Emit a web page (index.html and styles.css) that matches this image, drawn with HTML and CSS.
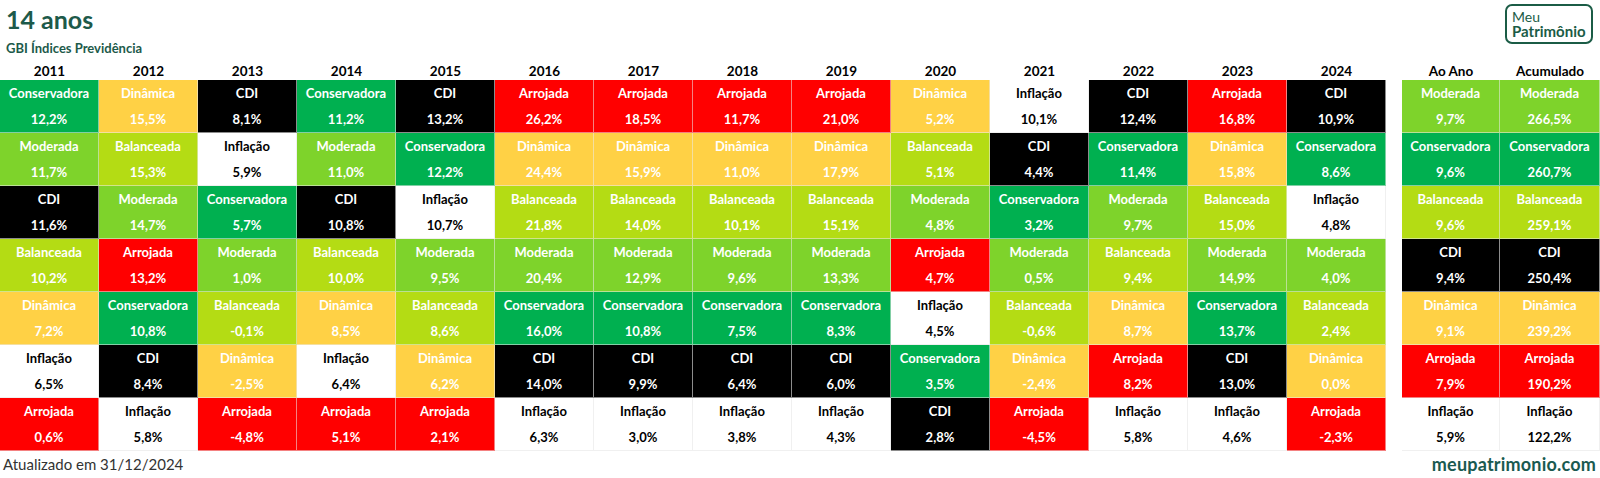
FILE: index.html
```html
<!DOCTYPE html>
<html lang="pt-BR">
<head>
<meta charset="utf-8">
<title>14 anos - GBI Índices Previdência</title>
<link rel="stylesheet" href="styles.css">
</head>
<body>
<div class="page">
  <header class="top">
    <div class="titles">
      <h1 class="title">14 anos</h1>
      <div class="subtitle">GBI Índices Previdência</div>
    </div>
    <div class="logo"><span class="logo-meu">Meu</span><span class="logo-pat">Patrimônio</span></div>
  </header>

  <main class="tables">
    <section class="grid years">
      <div class="hd">2011</div>
      <div class="cell c"><span>Conservadora</span><span>12,2%</span></div>
      <div class="cell m"><span>Moderada</span><span>11,7%</span></div>
      <div class="cell k"><span>CDI</span><span>11,6%</span></div>
      <div class="cell b"><span>Balanceada</span><span>10,2%</span></div>
      <div class="cell d"><span>Dinâmica</span><span>7,2%</span></div>
      <div class="cell i"><span>Inflação</span><span>6,5%</span></div>
      <div class="cell a"><span>Arrojada</span><span>0,6%</span></div>

      <div class="hd">2012</div>
      <div class="cell d"><span>Dinâmica</span><span>15,5%</span></div>
      <div class="cell b"><span>Balanceada</span><span>15,3%</span></div>
      <div class="cell m"><span>Moderada</span><span>14,7%</span></div>
      <div class="cell a"><span>Arrojada</span><span>13,2%</span></div>
      <div class="cell c"><span>Conservadora</span><span>10,8%</span></div>
      <div class="cell k"><span>CDI</span><span>8,4%</span></div>
      <div class="cell i"><span>Inflação</span><span>5,8%</span></div>

      <div class="hd">2013</div>
      <div class="cell k"><span>CDI</span><span>8,1%</span></div>
      <div class="cell i"><span>Inflação</span><span>5,9%</span></div>
      <div class="cell c"><span>Conservadora</span><span>5,7%</span></div>
      <div class="cell m"><span>Moderada</span><span>1,0%</span></div>
      <div class="cell b"><span>Balanceada</span><span>-0,1%</span></div>
      <div class="cell d"><span>Dinâmica</span><span>-2,5%</span></div>
      <div class="cell a"><span>Arrojada</span><span>-4,8%</span></div>

      <div class="hd">2014</div>
      <div class="cell c"><span>Conservadora</span><span>11,2%</span></div>
      <div class="cell m"><span>Moderada</span><span>11,0%</span></div>
      <div class="cell k"><span>CDI</span><span>10,8%</span></div>
      <div class="cell b"><span>Balanceada</span><span>10,0%</span></div>
      <div class="cell d"><span>Dinâmica</span><span>8,5%</span></div>
      <div class="cell i"><span>Inflação</span><span>6,4%</span></div>
      <div class="cell a"><span>Arrojada</span><span>5,1%</span></div>

      <div class="hd">2015</div>
      <div class="cell k"><span>CDI</span><span>13,2%</span></div>
      <div class="cell c"><span>Conservadora</span><span>12,2%</span></div>
      <div class="cell i"><span>Inflação</span><span>10,7%</span></div>
      <div class="cell m"><span>Moderada</span><span>9,5%</span></div>
      <div class="cell b"><span>Balanceada</span><span>8,6%</span></div>
      <div class="cell d"><span>Dinâmica</span><span>6,2%</span></div>
      <div class="cell a"><span>Arrojada</span><span>2,1%</span></div>

      <div class="hd">2016</div>
      <div class="cell a"><span>Arrojada</span><span>26,2%</span></div>
      <div class="cell d"><span>Dinâmica</span><span>24,4%</span></div>
      <div class="cell b"><span>Balanceada</span><span>21,8%</span></div>
      <div class="cell m"><span>Moderada</span><span>20,4%</span></div>
      <div class="cell c"><span>Conservadora</span><span>16,0%</span></div>
      <div class="cell k"><span>CDI</span><span>14,0%</span></div>
      <div class="cell i"><span>Inflação</span><span>6,3%</span></div>

      <div class="hd">2017</div>
      <div class="cell a"><span>Arrojada</span><span>18,5%</span></div>
      <div class="cell d"><span>Dinâmica</span><span>15,9%</span></div>
      <div class="cell b"><span>Balanceada</span><span>14,0%</span></div>
      <div class="cell m"><span>Moderada</span><span>12,9%</span></div>
      <div class="cell c"><span>Conservadora</span><span>10,8%</span></div>
      <div class="cell k"><span>CDI</span><span>9,9%</span></div>
      <div class="cell i"><span>Inflação</span><span>3,0%</span></div>

      <div class="hd">2018</div>
      <div class="cell a"><span>Arrojada</span><span>11,7%</span></div>
      <div class="cell d"><span>Dinâmica</span><span>11,0%</span></div>
      <div class="cell b"><span>Balanceada</span><span>10,1%</span></div>
      <div class="cell m"><span>Moderada</span><span>9,6%</span></div>
      <div class="cell c"><span>Conservadora</span><span>7,5%</span></div>
      <div class="cell k"><span>CDI</span><span>6,4%</span></div>
      <div class="cell i"><span>Inflação</span><span>3,8%</span></div>

      <div class="hd">2019</div>
      <div class="cell a"><span>Arrojada</span><span>21,0%</span></div>
      <div class="cell d"><span>Dinâmica</span><span>17,9%</span></div>
      <div class="cell b"><span>Balanceada</span><span>15,1%</span></div>
      <div class="cell m"><span>Moderada</span><span>13,3%</span></div>
      <div class="cell c"><span>Conservadora</span><span>8,3%</span></div>
      <div class="cell k"><span>CDI</span><span>6,0%</span></div>
      <div class="cell i"><span>Inflação</span><span>4,3%</span></div>

      <div class="hd">2020</div>
      <div class="cell d"><span>Dinâmica</span><span>5,2%</span></div>
      <div class="cell b"><span>Balanceada</span><span>5,1%</span></div>
      <div class="cell m"><span>Moderada</span><span>4,8%</span></div>
      <div class="cell a"><span>Arrojada</span><span>4,7%</span></div>
      <div class="cell i"><span>Inflação</span><span>4,5%</span></div>
      <div class="cell c"><span>Conservadora</span><span>3,5%</span></div>
      <div class="cell k"><span>CDI</span><span>2,8%</span></div>

      <div class="hd">2021</div>
      <div class="cell i"><span>Inflação</span><span>10,1%</span></div>
      <div class="cell k"><span>CDI</span><span>4,4%</span></div>
      <div class="cell c"><span>Conservadora</span><span>3,2%</span></div>
      <div class="cell m"><span>Moderada</span><span>0,5%</span></div>
      <div class="cell b"><span>Balanceada</span><span>-0,6%</span></div>
      <div class="cell d"><span>Dinâmica</span><span>-2,4%</span></div>
      <div class="cell a"><span>Arrojada</span><span>-4,5%</span></div>

      <div class="hd">2022</div>
      <div class="cell k"><span>CDI</span><span>12,4%</span></div>
      <div class="cell c"><span>Conservadora</span><span>11,4%</span></div>
      <div class="cell m"><span>Moderada</span><span>9,7%</span></div>
      <div class="cell b"><span>Balanceada</span><span>9,4%</span></div>
      <div class="cell d"><span>Dinâmica</span><span>8,7%</span></div>
      <div class="cell a"><span>Arrojada</span><span>8,2%</span></div>
      <div class="cell i"><span>Inflação</span><span>5,8%</span></div>

      <div class="hd">2023</div>
      <div class="cell a"><span>Arrojada</span><span>16,8%</span></div>
      <div class="cell d"><span>Dinâmica</span><span>15,8%</span></div>
      <div class="cell b"><span>Balanceada</span><span>15,0%</span></div>
      <div class="cell m"><span>Moderada</span><span>14,9%</span></div>
      <div class="cell c"><span>Conservadora</span><span>13,7%</span></div>
      <div class="cell k"><span>CDI</span><span>13,0%</span></div>
      <div class="cell i"><span>Inflação</span><span>4,6%</span></div>

      <div class="hd">2024</div>
      <div class="cell k"><span>CDI</span><span>10,9%</span></div>
      <div class="cell c"><span>Conservadora</span><span>8,6%</span></div>
      <div class="cell i"><span>Inflação</span><span>4,8%</span></div>
      <div class="cell m"><span>Moderada</span><span>4,0%</span></div>
      <div class="cell b"><span>Balanceada</span><span>2,4%</span></div>
      <div class="cell d"><span>Dinâmica</span><span>0,0%</span></div>
      <div class="cell a"><span>Arrojada</span><span>-2,3%</span></div>
    </section>

    <section class="grid totals">
      <div class="hd">Ao Ano</div>
      <div class="cell m"><span>Moderada</span><span>9,7%</span></div>
      <div class="cell c"><span>Conservadora</span><span>9,6%</span></div>
      <div class="cell b"><span>Balanceada</span><span>9,6%</span></div>
      <div class="cell k"><span>CDI</span><span>9,4%</span></div>
      <div class="cell d"><span>Dinâmica</span><span>9,1%</span></div>
      <div class="cell a"><span>Arrojada</span><span>7,9%</span></div>
      <div class="cell i"><span>Inflação</span><span>5,9%</span></div>

      <div class="hd">Acumulado</div>
      <div class="cell m"><span>Moderada</span><span>266,5%</span></div>
      <div class="cell c"><span>Conservadora</span><span>260,7%</span></div>
      <div class="cell b"><span>Balanceada</span><span>259,1%</span></div>
      <div class="cell k"><span>CDI</span><span>250,4%</span></div>
      <div class="cell d"><span>Dinâmica</span><span>239,2%</span></div>
      <div class="cell a"><span>Arrojada</span><span>190,2%</span></div>
      <div class="cell i"><span>Inflação</span><span>122,2%</span></div>
    </section>
  </main>

  <footer class="bottom">
    <span class="updated">Atualizado em 31/12/2024</span>
    <span class="site">meupatrimonio.com</span>
  </footer>
</div>
</body>
</html>
```

FILE: styles.css
```css
* { box-sizing: border-box; }

html, body {
  margin: 0;
  padding: 0;
  background: #ffffff;
}

body {
  font-family: Lato, "Open Sans", "Liberation Sans", sans-serif;
  color: #000;
  width: 1600px;
  height: 478px;
  overflow: hidden;
}

.page {
  display: flex;
  flex-direction: column;
  width: 1600px;
  height: 478px;
}

.top {
  height: 60px;
  display: flex;
  justify-content: space-between;
  align-items: flex-start;
}

.titles {
  padding: 5px 0 0 6px;
}

.title {
  margin: 0;
  font-size: 25px;
  line-height: 28px;
  font-weight: 700;
  color: #1d5a4a;
}

.subtitle {
  margin-top: 7px;
  font-size: 13px;
  line-height: 16px;
  font-weight: 700;
  color: #1d5a4a;
}

.logo {
  margin: 4px 7px 0 0;
  width: 88px;
  height: 40px;
  border: 2px solid #1b5c46;
  border-radius: 7px;
  display: flex;
  flex-direction: column;
  justify-content: center;
  padding-left: 5px;
  color: #1b5c46;
  line-height: 14px;
}

.logo-meu {
  font-size: 14px;
  font-weight: 400;
}

.logo-pat {
  font-size: 15px;
  font-weight: 700;
}

.tables {
  display: flex;
  gap: 16px;
  height: 390px;
}

.grid {
  display: grid;
  grid-auto-flow: column;
  grid-template-rows: 20px repeat(7, 1fr);
  height: 390px;
}

.years {
  width: 1386px;
  grid-template-columns: repeat(14, 1fr);
}

.totals {
  width: 198px;
  grid-template-columns: 98px 100px;
}

.hd {
  display: flex;
  align-items: center;
  justify-content: center;
  font-size: 13.5px;
  font-weight: 700;
  color: #000;
  padding-top: 2px;
}

.cell {
  display: flex;
  flex-direction: column;
  align-items: center;
  justify-content: center;
  font-size: 13px;
  font-weight: 700;
  line-height: 26px;
  color: #fff;
  border: 1px solid rgba(235, 235, 235, 0.55);
  border-width: 0 1px 1px 0;
}

.c { background: #00b050; }
.m { background: #7ed32b; }
.b { background: #b4dc14; }
.d { background: #ffd145; }
.a { background: #ff0000; }
.k { background: #000000; border-color: rgba(200, 200, 200, 0.7); }
.i { background: #ffffff; color: #000; border-color: #f0f0f0; }

.bottom {
  flex: 1;
  display: flex;
  justify-content: space-between;
  align-items: center;
  padding: 0 4px 0 3px;
}

.updated {
  font-size: 15px;
  color: #333;
}

.site {
  font-size: 18px;
  font-weight: 700;
  color: #1a5a50;
  letter-spacing: 0.2px;
}
```
